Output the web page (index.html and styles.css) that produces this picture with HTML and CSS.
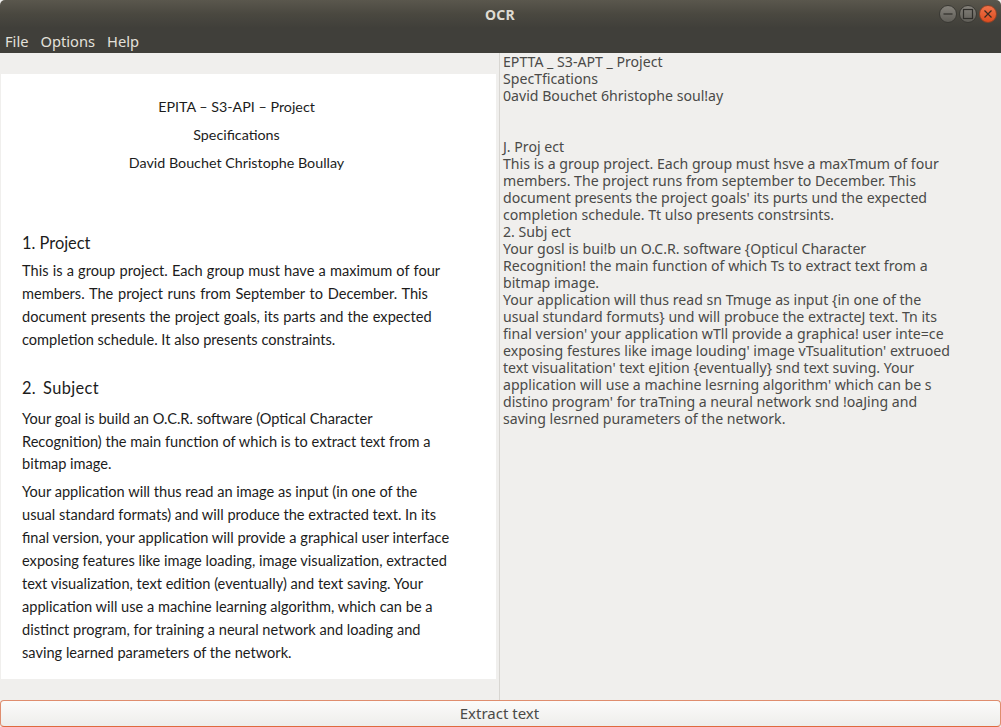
FILE: index.html
```html
<!DOCTYPE html>
<html lang="en">
<head>
<meta charset="utf-8">
<title>OCR</title>
<link rel="stylesheet" href="styles.css">
</head>
<body>
<div class="window">
  <header class="titlebar">
    <span class="title">OCR</span>
    <div class="controls">
      <span class="ctl ctl-grey"><svg viewBox="0 0 16 16" width="16" height="16"><path d="M3.5 8h9" stroke="#2f2e2a" stroke-width="1.2" fill="none"/></svg></span>
      <span class="ctl ctl-grey"><svg viewBox="0 0 16 16" width="16" height="16"><rect x="3.5" y="3.5" width="9" height="9" stroke="#2f2e2a" stroke-width="1.2" fill="none"/></svg></span>
      <span class="ctl ctl-close"><svg viewBox="0 0 16 16" width="16" height="16"><path d="M4.5 4.5l7 7M11.5 4.5l-7 7" stroke="#3a2a20" stroke-width="1.2" fill="none"/></svg></span>
    </div>
  </header>
  <nav class="menubar">
    <span class="menu-item">File</span>
    <span class="menu-item">Options</span>
    <span class="menu-item">Help</span>
  </nav>
  <main class="panes">
    <section class="left">
      <div class="page">
        <div class="head">
          <p>EPITA – S3-API – Project</p>
          <p>Specifications</p>
          <p>David Bouchet Christophe Boullay</p>
        </div>
        <h2 class="h-first">1. Project</h2>
        <p class="para"><span class="sp-a">This is a group project. Each group must have a maximum of four</span><br><span class="sp-b">members. The project runs from September to December. This</span><br><span class="sp-a">document presents the project goals, its parts and the expected</span><br>completion schedule. It also presents constraints.</p>
        <h2 class="h-second">2. Subject</h2>
        <p class="para">Your goal is build an O.C.R. software (Optical Character<br>Recognition) the main function of which is to extract text from a<br>bitmap image.</p>
        <p class="para">Your application will thus read an image as input (in one of the<br>usual standard formats) and will produce the extracted text. In its<br>final version, your application will provide a graphical user interface<br>exposing features like image loading, image visualization, extracted<br>text visualization, text edition (eventually) and text saving. Your<br>application will use a machine learning algorithm, which can be a<br>distinct program, for training a neural network and loading and<br>saving learned parameters of the network.</p>
      </div>
    </section>
    <section class="right">EPTTA _ S3-APT _ Project
SpecTfications
0avid Bouchet 6hristophe soul!ay


J. Proj ect
This is a group project. Each group must hsve a maxTmum of four
members. The project runs from september to December. This
document presents the project goals' its purts und the expected
completion schedule. Tt ulso presents constrsints.
2. Subj ect
Your gosl is bui!b un O.C.R. software {Opticul Character
Recognition! the main function of which Ts to extract text from a
bitmap image.
Your application will thus read sn Tmuge as input {in one of the
usual stundard formuts} und will probuce the extracteJ text. Tn its
final version' your application wTll provide a graphica! user inte=ce
exposing festures like image louding' image vTsualitution' extruoed
text visualitation' text eJition {eventually} snd text suving. Your
application will use a machine lesrning algorithm' which can be s
distino program' for traTning a neural network snd !oaJing and
saving lesrned purameters of the network.</section>
  </main>
  <footer class="footer">
    <button class="extract" type="button">Extract text</button>
  </footer>
</div>
</body>
</html>
```
FILE: styles.css
```css
* { box-sizing: border-box; }
html, body { margin: 0; padding: 0; height: 100%; background: #f0efed; }
body { font-family: "Noto Sans", "Open Sans", sans-serif; overflow: hidden; }
.window { width: 1001px; height: 727px; display: flex; flex-direction: column; }
.titlebar {
  height: 28px; flex: none; position: relative; display: flex; align-items: center; justify-content: center;
  background: linear-gradient(#5a574d 0, #4a4840 14px, #403f3a 28px);
  border-radius: 5px 5px 0 0;
}
.title { color: #dfdbd2; font-size: 14px; font-weight: 700; letter-spacing: .3px; margin-right: 1px; }
.controls { position: absolute; right: 4px; top: 5px; display: flex; gap: 2px; }
.ctl { width: 18px; height: 18px; border-radius: 50%; display: flex; align-items: center; justify-content: center; border: 1px solid #3a3934; }
.ctl-grey { background: linear-gradient(#85827b, #5f5d57); }
.ctl-close { background: linear-gradient(#f0734a, #dd4c1f); border-color: #8e4226; }
.menubar { height: 25px; flex: none; background: #403f3a; display: flex; align-items: center; padding: 0 0 0 5px; gap: 12px; color: #e4e1da; font-size: 14.7px; }
.panes { flex: 1; min-height: 0; display: flex; }
.left { width: 500px; flex: none; border-right: 1px solid #d8d6d2; padding: 21px 3px 21px 1px; }
.page { background: #fff; height: 605px; padding: 19px 0 0 21px; font-family: Lato, "Liberation Sans", sans-serif; font-size: 14.6px; color: #1c1c1c; }
.head { width: 429px; text-align: center; font-size: 14.3px; }
.head p { margin: 0; line-height: 28px; }
.page h2 { font-weight: 400; font-size: 16.4px; line-height: 24px; }
.h-first { margin: 0 0 2px; padding-top: 54px; }
.h-second { margin: 0 0 5px; padding-top: 22px; letter-spacing: .35px; word-spacing: 2.5px; }
.para { margin: 0 0 2px; line-height: 22.9px; padding-top: 3px; white-space: nowrap; }
.sp-a { word-spacing: .45px; }
.sp-b { word-spacing: 1px; }
.right {
  flex: 1; padding: 0 0 0 3px; white-space: pre-line; color: #4a4a48; font-size: 14.13px; line-height: 17px;
  font-family: "Noto Sans", "Open Sans", sans-serif;
}
.footer { flex: none; height: 27px; }
.extract {
  width: 100%; height: 27px; display: block; border: 1px solid #df8d6e; border-bottom-color: #e0693f; border-radius: 4px;
  background: linear-gradient(#fbfbfa, #eeedeb); color: #4a4a48; font: 15px "Noto Sans", sans-serif; padding: 0 2px 2px 0;
}
```
